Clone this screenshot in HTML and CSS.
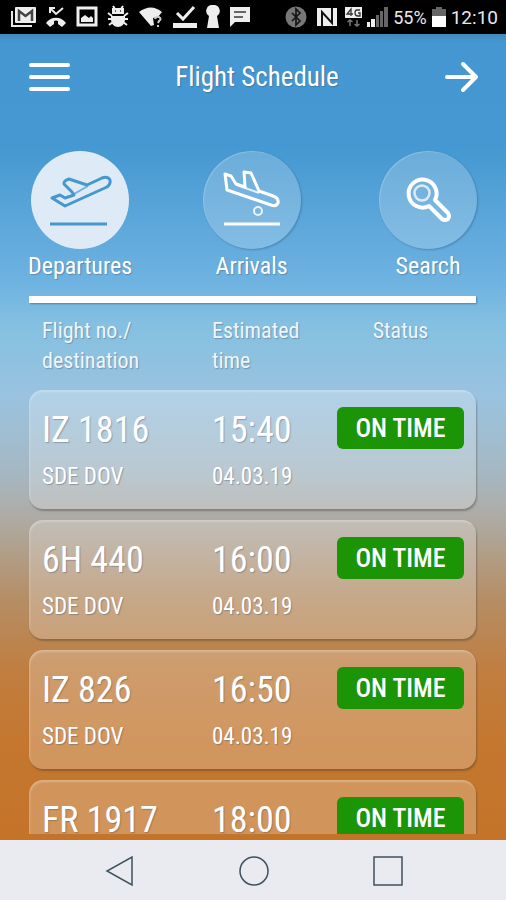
FILE: index.html
```html
<!DOCTYPE html>
<html lang="en">
<head>
<meta charset="utf-8">
<meta name="viewport" content="width=device-width, initial-scale=1">
<title>Flight Schedule</title>
<link rel="stylesheet" href="styles.css">
</head>
<body>
<div class="status-bar">
  <div class="status-group notices">
    <svg width="26" height="24" viewBox="0 0 26 24"><path d="M2 6v15h20" fill="none" stroke="#e8e8e8" stroke-width="2"/><rect x="5" y="2" width="21" height="16" rx="1" fill="#eee"/><path d="M9 16V6l6.500 5L22 6v10" fill="none" stroke="#444" stroke-width="2.500"/></svg>
    <svg width="22" height="24" viewBox="0 0 22 24"><path d="M1 18c5-7 15-7 20 0l-4 4-4-3v-3q-2-1-4 0v3l-4 3z" fill="#eee"/><path d="M5 8V3h5M5 3l6 6 7-6" fill="none" stroke="#eee" stroke-width="2"/></svg>
    <svg width="22" height="24" viewBox="0 0 22 24"><rect x="2" y="3" width="18" height="17" fill="none" stroke="#eee" stroke-width="3"/><path d="M5 17v-4l4-3 4 3 2-2 2 2v4z" fill="#eee"/></svg>
    <svg width="22" height="24" viewBox="0 0 22 24"><path d="M6 1l2 3M16 1l-2 3M1 8l4 3M21 8l-4 3M1 14h4M17 14h4M2 20l4-3M20 20l-4-3" stroke="#eee" stroke-width="2"/><path d="M5 9V3h12v6zM4 11h14v4q-1 7-7 7t-7-7z" fill="#eee"/><path d="M8 6h1M13 6h1" stroke="#333" stroke-width="1.500"/></svg>
    <svg width="26" height="24" viewBox="0 0 26 24"><path d="M1 7q12-9 23 0l-4 5-5 1 1 7-3 1z" fill="#eee"/><path d="M17 14q1-3 4-2 3 2 0 4l-1 2M20 20v2" fill="none" stroke="#ccc" stroke-width="2"/></svg>
    <svg width="24" height="24" viewBox="0 0 24 24"><path d="M4 8l6 6L21 2" fill="none" stroke="#eee" stroke-width="3"/><path d="M0 18h24v5H0z" fill="#eee"/></svg>
    <svg width="14" height="24" viewBox="0 0 14 24"><path d="M7 0a6 6 0 0 1 4 11l2 12H1l2-12A6 6 0 0 1 7 0z" fill="#eee"/></svg>
    <svg width="22" height="24" viewBox="0 0 22 24"><path d="M1 2h20v15H6l-5 5z" fill="#eee"/><path d="M5 7h12M5 12h9" stroke="#666" stroke-width="2"/></svg>
  </div>
  <div class="status-group system">
    <svg width="22" height="24" viewBox="0 0 22 24"><circle cx="11" cy="12" r="10.500" fill="#777"/><path d="M7 8l8 8-4 4V4l4 4-8 8" fill="none" stroke="#151515" stroke-width="1.700"/></svg>
    <svg class="nfc" width="20" height="24" viewBox="0 0 20 24"><path d="M0 3h20v18H0z" fill="#eee"/><path d="M5 21V7l10 11V3" fill="none" stroke="#111" stroke-width="2"/></svg>
    <svg width="17" height="24" viewBox="0 0 17 24"><path d="M0 2h17v11H0z" fill="#eee"/><path d="M6 11V4L2 9h6M15 5h-3q-2 0-2 3t3 3h2V8h-2" fill="none" stroke="#333" stroke-width="1.300"/><path d="M5 21v-6M2.500 17L5 15l2.500 2M12 15v6M9.500 19l2.500 2 2.500-2" fill="none" stroke="#777" stroke-width="1.500"/></svg>
    <svg width="21" height="24" viewBox="0 0 21 24"><path d="M0 17h3v5H0zM4 14h4v8H4z" fill="#eee"/><path d="M9 10h3v12H9zM13 6h3v16h-3zM17 2h4v20h-4z" fill="#666"/></svg>
    <span class="battery-level">55%</span>
    <svg width="14" height="24" viewBox="0 0 14 24"><path d="M4 2h6v2h4v8H0V4h4z" fill="#666"/><path d="M0 11h14v11H0z" fill="#fff"/></svg>
    <span class="clock">12:10</span>
  </div>
</div>

<main class="app">
  <header class="app-header">
    <button class="icon-button" type="button" aria-label="Menu">
      <svg width="42" height="34" viewBox="0 0 42 34"><path d="M2 5h37M2 17h37M2 29h37" stroke="#fff" stroke-width="4" stroke-linecap="round"/></svg>
    </button>
    <h1 class="title">Flight Schedule</h1>
    <button class="icon-button" type="button" aria-label="Next">
      <svg width="36" height="34" viewBox="0 0 36 34"><path d="M4 17h29M20 4l13 13-13 13" fill="none" stroke="#fff" stroke-width="4" stroke-linecap="round" stroke-linejoin="round"/></svg>
    </button>
  </header>

  <nav class="tabs">
    <button class="tab active" type="button">
      <span class="disc"><svg width="98" height="98" viewBox="0 0 98 98"><g fill="none" stroke="#4797cf" stroke-width="3" stroke-linejoin="round"><path d="M21 47l8-3 5 3 9-3-2-3-8-8q-1-3 5-5l18 6 15-7q6-2 8 2 1 4-3 7L34 55z"/><path d="M43 43l14-8" stroke-width="2" opacity=".7"/><path d="M19 73h57"/></g></svg></span>
      <span>Departures</span>
    </button>
    <button class="tab" type="button">
      <span class="disc"><svg width="98" height="98" viewBox="0 0 98 98"><g fill="none" stroke="#fff" stroke-width="3" stroke-linejoin="round"><path d="M22 23l6 2 5 8 9 3-1-15 7 1 8 18 14 5q6 2 5 7-2 4-7 2L24 39z"/><path d="M34 34l22 8" stroke-width="2" opacity=".8"/><circle cx="55" cy="60" r="4" stroke-width="2" opacity=".85"/><path d="M21 73h56"/></g></svg></span>
      <span>Arrivals</span>
    </button>
    <button class="tab search" type="button">
      <span class="disc"><svg width="98" height="98" viewBox="0 0 98 98"><g fill="none" stroke="#fff" stroke-width="4" stroke-linejoin="round"><path d="M50 55a14 14 0 1 1 6-6l13 13q2 3 0 6-3 2-6 0z"/><circle cx="43" cy="42" r="7.500" stroke-width="2.500" opacity=".75"/></g></svg></span>
      <span>Search</span>
    </button>
  </nav>

  <div class="schedule">
    <table>
      <thead>
        <tr><th>Flight no./<br>destination</th><th>Estimated<br>time</th><th class="center">Status</th></tr>
      </thead>
      <tbody>
        <tr><td><strong>IZ 1816</strong><span>SDE DOV</span></td><td><strong>15:40</strong><span>04.03.19</span></td><td><em class="badge">ON TIME</em></td></tr>
        <tr><td><strong>6H 440</strong><span>SDE DOV</span></td><td><strong>16:00</strong><span>04.03.19</span></td><td><em class="badge">ON TIME</em></td></tr>
        <tr><td><strong>IZ 826</strong><span>SDE DOV</span></td><td><strong>16:50</strong><span>04.03.19</span></td><td><em class="badge">ON TIME</em></td></tr>
        <tr><td><strong>FR 1917</strong></td><td><strong>18:00</strong></td><td><em class="badge">ON TIME</em></td></tr>
      </tbody>
    </table>
  </div>
</main>

<footer class="nav-bar">
  <button type="button" aria-label="Back"><svg width="32" height="32" viewBox="0 0 32 32"><path d="M28 2v28L3 16z"/></svg></button>
  <button type="button" aria-label="Home"><svg width="32" height="32" viewBox="0 0 32 32"><circle cx="16" cy="16" r="14"/></svg></button>
  <button type="button" aria-label="Recent apps"><svg width="32" height="32" viewBox="0 0 32 32"><path d="M2 2h28v28H2z"/></svg></button>
</footer>
</body>
</html>
```
FILE: styles.css
```css
* {
  box-sizing: border-box;
}

body {
  margin: 0;
  height: 100vh;
  display: flex;
  flex-direction: column;
  overflow: hidden;
  font-family: "Roboto Condensed", "Liberation Sans Narrow", Roboto, sans-serif;
  color: #fff;
}

svg {
  display: block;
  flex: none;
}

button {
  margin: 0;
  padding: 0;
  border: 0;
  background: none;
  color: inherit;
  font: inherit;
}

.status-bar {
  flex: none;
  height: 34px;
  padding: 0 8px 0 10px;
  display: flex;
  align-items: center;
  justify-content: space-between;
  background: #000;
  color: #e8e8e8;
  font-family: Roboto, sans-serif;
  font-size: 18px;
}

.status-group {
  display: flex;
  align-items: center;
}

.notices {
  gap: 9px;
}

.system {
  gap: 5px;
}

.nfc {
  margin: 0 3px 0 5px;
}

.clock {
  font-size: 19px;
}

.app {
  flex: 1;
  min-height: 0;
  display: flex;
  flex-direction: column;
  padding: 0 30px 6px 29px;
  background: linear-gradient(#4389bb 0, #4497d0 1%, #4598d1 14%, #6fb3e1 31%, #84c0e1 36%, #9ac3df 45%, #a5b8c4 54%, #aeaba4 60%, #b58e66 70%, #c07e40 79%, #c4772f 88%, #c37429 100%);
  text-shadow: 1px 1px 1px rgba(60, 70, 90, 0.35);
}

.app-header {
  flex: none;
  height: 86px;
  margin-right: -3px;
  display: flex;
  align-items: center;
  justify-content: space-between;
}

.title {
  margin: 0;
  font-size: 27px;
  font-weight: 400;
}

.tabs {
  flex: none;
  display: grid;
  grid-template-columns: 104fr 239fr 106fr;
  justify-items: center;
  align-items: start;
  margin: 0 -1px;
  padding-top: 31px;
  height: 176px;
}

.tab {
  display: flex;
  flex-direction: column;
  align-items: center;
  gap: 2px;
  font-size: 24px;
  line-height: 30px;
  text-shadow: inherit;
}

.search {
  justify-self: end;
}

.disc {
  border-radius: 50%;
  background: rgba(255, 255, 255, 0.2);
  box-shadow: inset 1px 1px 1px rgba(255, 255, 255, 0.2), 1px 1px 2px rgba(40, 80, 120, 0.4);
}

.active .disc {
  background: #deebf7;
  box-shadow: none;
}

.schedule {
  flex: 1;
  min-height: 0;
  margin: 0 -2px;
  padding: 0 2px;
  overflow: hidden;
}

table,
tbody {
  display: block;
}

thead {
  display: block;
  padding-bottom: 14px;
}

thead::before {
  content: "";
  display: block;
  height: 7px;
  margin-bottom: 13px;
  background: #fff;
  box-shadow: 1px 1px 2px rgba(40, 80, 120, 0.5);
}

tr {
  display: grid;
  grid-template-columns: 170fr 125fr 127fr;
  padding: 0 12px 0 13px;
}

th,
td {
  padding: 0;
  text-align: left;
  font-weight: 400;
}

th {
  font-size: 22px;
  line-height: 30px;
  color: #eef6fc;
}

.center {
  text-align: center;
}

tbody tr {
  height: 119px;
  margin-bottom: 11px;
  border-radius: 14px;
  background: rgba(255, 255, 255, 0.23);
  box-shadow: inset 1px 2px 2px rgba(255, 255, 255, 0.25), 1px 2px 2px rgba(70, 60, 50, 0.4);
}

td {
  padding-top: 17px;
}

td strong,
td span {
  display: block;
  font-weight: 400;
}

td strong {
  font-size: 36px;
  line-height: 46px;
}

td span {
  font-size: 23px;
  line-height: 48px;
}

.badge {
  display: block;
  border-radius: 6px;
  background: #1b9505;
  font-size: 26px;
  font-style: normal;
  font-weight: 500;
  line-height: 42px;
  text-align: center;
  text-shadow: none;
}

.nav-bar {
  flex: none;
  height: 60px;
  padding: 2px 102px 0 104px;
  display: flex;
  align-items: center;
  justify-content: space-between;
  background: #e9ebf0;
}

.nav-bar svg {
  fill: none;
  stroke: #40515e;
  stroke-width: 1.5;
}
```
